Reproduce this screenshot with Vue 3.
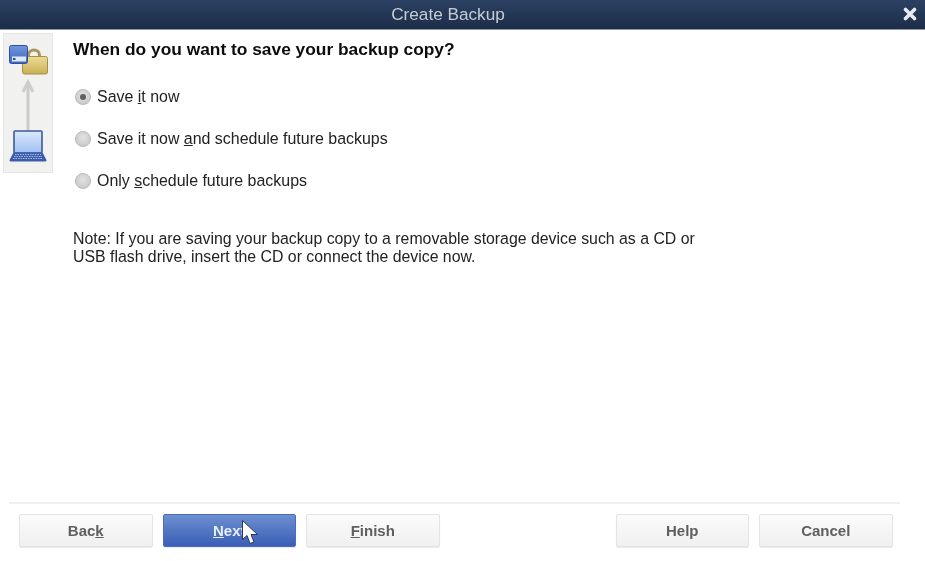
<script setup>
const options = [
	{ before: 'Save ', key: 'i', after: 't now', checked: true },
	{ before: 'Save it now ', key: 'a', after: 'nd schedule future backups', checked: false },
	{ before: 'Only ', key: 's', after: 'chedule future backups', checked: false }
]
</script>

<template>
	<div class="dialog">
		<header class="titlebar">
			<span class="title">Create Backup</span>
			<svg class="close" viewBox="0 0 14 14" width="14" height="14">
				<path d="M2.5 2.5 L11.5 11.5 M11.5 2.5 L2.5 11.5" stroke="#e8ebef" stroke-width="3.6" stroke-linecap="round" />
			</svg>
		</header>

		<main class="body">
			<aside class="side">
				<svg viewBox="0 0 50 140" width="50" height="140">
					<!-- arrow -->
					<path d="M25 98 V50" stroke="#cbcbcb" stroke-width="3" fill="none" />
					<path d="M20 59 L25 49 L30 59" stroke="#cdcdcd" stroke-width="3" fill="none" />
					<!-- lock -->
					<path d="M25.5 24 V22 a5.5 5 0 0 1 11 0 V24" stroke="#a8965a" stroke-width="3" fill="none" />
					<rect x="19.5" y="23.5" width="25" height="17.5" rx="2" fill="url(#lockFill)" stroke="#a58f45" />
					<!-- disk -->
					<rect x="6.5" y="12.5" width="18" height="18" rx="2" fill="url(#diskFill)" stroke="#2f4f9e" />
					<rect x="9" y="23.5" width="14" height="5" fill="#dfe8f8" />
					<rect x="10" y="25" width="2.5" height="2" fill="#2f4f9e" />
					<!-- laptop -->
					<rect x="11" y="98" width="28" height="22" rx="1" fill="url(#screenFill)" stroke="#3c5a9c" stroke-width="1.6" />
					<path d="M10.5 119.5 H39.5 L43.5 127 a1.5 1.5 0 0 1 -1 1.5 H7.5 a1.5 1.5 0 0 1 -1 -1.5 Z" fill="#3a5cad" />
					<path d="M12 121.5 H38 M11 123.5 H39 M10 125.5 H40" stroke="#a9bce4" stroke-width="1" stroke-dasharray="1.5 1" />
					<defs>
						<linearGradient id="lockFill" x1="0" y1="0" x2="0" y2="1">
							<stop offset="0" stop-color="#ecdc94" />
							<stop offset="1" stop-color="#c8b057" />
						</linearGradient>
						<linearGradient id="diskFill" x1="0" y1="0" x2="0" y2="1">
							<stop offset="0" stop-color="#6f96dc" />
							<stop offset="1" stop-color="#3f66bb" />
						</linearGradient>
						<linearGradient id="screenFill" x1="0" y1="0" x2="0" y2="1">
							<stop offset="0" stop-color="#dbe8fc" />
							<stop offset="1" stop-color="#9fc0f2" />
						</linearGradient>
					</defs>
				</svg>
			</aside>

			<section class="content">
				<h1 class="heading">When do you want to save your backup copy?</h1>

				<div class="options">
					<div v-for="opt in options" :key="opt.before + opt.after" class="option">
						<span class="radio" :class="{ checked: opt.checked }"></span>
						<span>{{ opt.before }}<u>{{ opt.key }}</u>{{ opt.after }}</span>
					</div>
				</div>

				<p class="note">
					Note: If you are saving your backup copy to a removable storage device such as a CD or<br />
					USB flash drive, insert the CD or connect the device now.
				</p>
			</section>
		</main>

		<footer class="footer">
			<div class="group">
				<button class="btn">Bac<u>k</u></button>
				<button class="btn primary">
					<span><u>N</u>ext</span>
					<svg class="cursor" viewBox="0 0 18 27" width="18" height="27">
						<path d="M1.5 1.5 V20.5 L6 16.5 L9 24.5 L13 23 L10 15.5 H16.5 Z" fill="#fff" stroke="#26365f" stroke-width="1" stroke-linejoin="round" />
					</svg>
				</button>
				<button class="btn"><u>F</u>inish</button>
			</div>
			<div class="group">
				<button class="btn">Help</button>
				<button class="btn">Cancel</button>
			</div>
		</footer>
	</div>
</template>

<style>
html, body {
	margin: 0;
	background: #fff;
}
</style>

<style scoped>
.dialog {
	width: 925px;
	height: 561px;
	display: flex;
	flex-direction: column;
	background: #fff;
	font-family: "Liberation Sans", Arial, sans-serif;
	overflow: hidden;
	filter: blur(0.35px);
}

.titlebar {
	height: 29px;
	flex: none;
	display: flex;
	align-items: center;
	justify-content: center;
	padding-right: 29px;
	position: relative;
	background: linear-gradient(#2b4163, #1c2d48);
	border-bottom: 1px solid #8c97a6;
}

.title {
	color: #c6ccd4;
	font-size: 17.2px;
}

.close {
	position: absolute;
	right: 8px;
	top: 7px;
}

.body {
	flex: 1;
	display: flex;
	padding: 3px 0 0 3px;
}

.side {
	width: 50px;
	height: 140px;
	flex: none;
	background: #f1f1f0;
	border: 1px solid #e6e6e6;
	box-sizing: border-box;
}

.side svg {
	display: block;
	margin: -1px;
}

.content {
	margin-left: 20px;
	color: #111;
}

.heading {
	margin: 7px 0 0;
	font-size: 17.35px;
	line-height: 18px;
	font-weight: 700;
	color: #0c0c0c;
}

.options {
	margin-top: 29px;
	display: flex;
	flex-direction: column;
	gap: 22px;
}

.option {
	height: 20px;
	display: flex;
	align-items: center;
	gap: 6px;
	font-size: 15.95px;
	color: #222;
	padding-left: 2px;
}

.radio {
	width: 16px;
	height: 16px;
	border-radius: 50%;
	flex: none;
	box-sizing: border-box;
	border: 1px solid #b8b8b8;
	background: radial-gradient(circle at 50% 40%, #e2e2e2, #c4c4c4);
	display: flex;
	align-items: center;
	justify-content: center;
}

.radio.checked::after {
	content: "";
	width: 6px;
	height: 6px;
	border-radius: 50%;
	background: #606060;
}

.note {
	margin: 39px 0 0;
	font-size: 15.85px;
	line-height: 17.5px;
	color: #222;
}

.footer {
	flex: none;
	margin: 0 25px 14px 9px;
	padding: 10px 7.5px 0 10px;
	border-top: 2px solid #efefef;
	display: flex;
	justify-content: space-between;
}

.group {
	display: flex;
	gap: 10px;
}

.btn {
	width: 133.5px;
	height: 33px;
	padding: 0;
	position: relative;
	font-family: inherit;
	font-size: 15px;
	font-weight: 700;
	color: #5f5f5f;
	background: linear-gradient(#fbfbfb, #f0f0f0);
	border: 1px solid #e4e4e4;
	border-radius: 2px;
	box-shadow: 0 1px 1px #e8e8e8;
}

.primary {
	color: #e9eefb;
	background: linear-gradient(#6d90d0, #3a5eb6);
	border-color: #4a6dbd;
}

.cursor {
	position: absolute;
	left: 77px;
	top: 4px;
}
</style>
